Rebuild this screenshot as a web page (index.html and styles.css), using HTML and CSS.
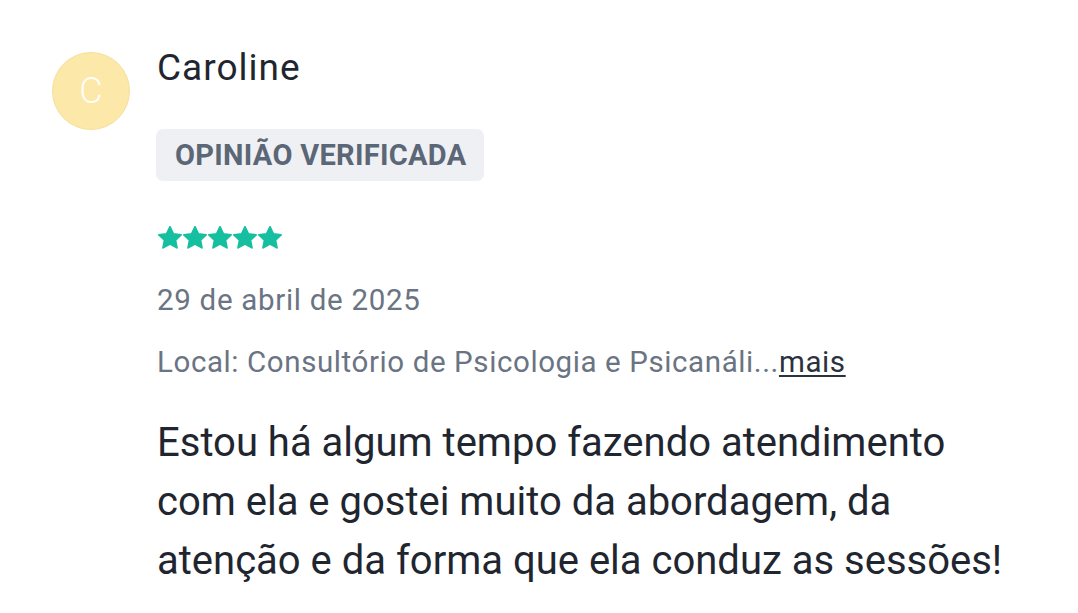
FILE: index.html
```html
<!DOCTYPE html>
<html lang="pt">
<head>
<meta charset="utf-8">
<link rel="stylesheet" href="styles.css">
</head>
<body>
<div class="review">
  <div class="avatar">C</div>
  <div class="content">
    <div class="name">Caroline</div>
    <div class="badge">OPINIÃO VERIFICADA</div>
    <div class="stars">
      <svg viewBox="1.6 1.4 20.8 20.8" class="star"><path d="M12 2.2l2.9 6.1 6.7.8-4.9 4.6 1.3 6.6L12 17l-6 3.3 1.3-6.6L2.4 9.1l6.7-.8z"/></svg>
      <svg viewBox="1.6 1.4 20.8 20.8" class="star"><path d="M12 2.2l2.9 6.1 6.7.8-4.9 4.6 1.3 6.6L12 17l-6 3.3 1.3-6.6L2.4 9.1l6.7-.8z"/></svg>
      <svg viewBox="1.6 1.4 20.8 20.8" class="star"><path d="M12 2.2l2.9 6.1 6.7.8-4.9 4.6 1.3 6.6L12 17l-6 3.3 1.3-6.6L2.4 9.1l6.7-.8z"/></svg>
      <svg viewBox="1.6 1.4 20.8 20.8" class="star"><path d="M12 2.2l2.9 6.1 6.7.8-4.9 4.6 1.3 6.6L12 17l-6 3.3 1.3-6.6L2.4 9.1l6.7-.8z"/></svg>
      <svg viewBox="1.6 1.4 20.8 20.8" class="star"><path d="M12 2.2l2.9 6.1 6.7.8-4.9 4.6 1.3 6.6L12 17l-6 3.3 1.3-6.6L2.4 9.1l6.7-.8z"/></svg>
    </div>
    <div class="date">29 de abril de 2025</div>
    <div class="local">Local: Consultório de Psicologia e Psicanáli...<a class="more">mais</a></div>
    <p class="text">Estou há algum tempo fazendo atendimento com ela e gostei muito da abordagem, da atenção e da forma que ela conduz as sessões!</p>
  </div>
</div>
</body>
</html>
```
FILE: styles.css
```css
html, body {
  margin: 0;
  padding: 0;
  background: #ffffff;
  font-family: Roboto, "Noto Sans", sans-serif;
}
.review {
  display: flex;
  align-items: flex-start;
  padding: 48px 0 0 52px;
  gap: 27px;
}
.avatar {
  width: 76px;
  height: 76px;
  margin-top: 4px;
  border-radius: 50%;
  background: #fce8a9;
  border: 1px solid #f6df9a;
  color: #fffdf6;
  font-size: 36px;
  font-weight: 300;
  display: flex;
  align-items: center;
  justify-content: center;
  flex-shrink: 0;
}
.content {
  display: flex;
  flex-direction: column;
  align-items: flex-start;
}
.name {
  font-size: 37px;
  line-height: 40px;
  letter-spacing: 1px;
  color: #1f2630;
}
.badge {
  margin-top: 41px;
  margin-left: -1px;
  background: #eef0f3;
  color: #5b6676;
  font-weight: 700;
  font-size: 29px;
  letter-spacing: 0.3px;
  line-height: 52px;
  padding: 0 18px 0 19px;
  border-radius: 7px;
}
.stars {
  margin-top: 45px;
  margin-left: 1px;
  display: flex;
  gap: 1px;
}
.star {
  display: block;
  width: 24px;
  height: 24px;
  fill: #16bf9f;
  stroke: #16bf9f;
  stroke-width: 1.6;
  stroke-linejoin: round;
}
.date {
  margin-top: 32px;
  font-size: 29.5px;
  line-height: 36px;
  letter-spacing: 0.7px;
  color: #6a7482;
}
.local {
  margin-top: 26px;
  font-size: 29.5px;
  line-height: 36px;
  letter-spacing: 0.6px;
  color: #6a7482;
}
.more {
  color: #2a323d;
  text-decoration: underline;
  text-underline-offset: 3px;
}
.text {
  margin: 33px 0 0 0;
  width: 850px;
  font-size: 40px;
  line-height: 59px;
  color: #1f2630;
}
```
